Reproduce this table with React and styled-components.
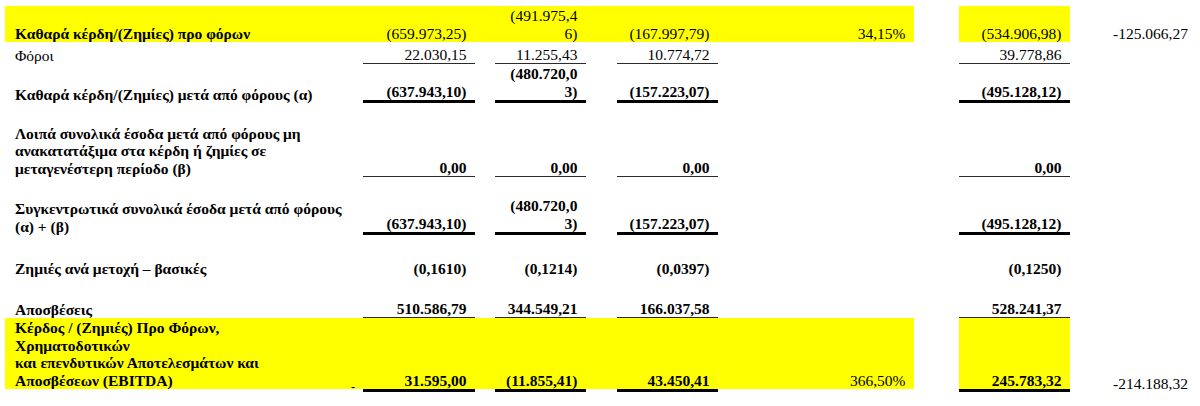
import React from 'react';
import styled, { createGlobalStyle } from 'styled-components';

const GlobalStyle = createGlobalStyle`
  html, body { margin: 0; padding: 0; background: #fff; }
`;

const YELLOW = '#ffff00';

const Sheet = styled.table`
  margin: 6px 0 0 5px;
  width: 1195px;
  table-layout: fixed;
  border-collapse: separate;
  border-spacing: 0;
  font-family: "Liberation Serif", "Times New Roman", serif;
  font-size: 15.5px;
  line-height: 17.5px;
  color: #000;
`;

const Col = styled.col`
  width: ${p => p.$w}px;
`;

const Row = styled.tr`
  height: ${p => p.$h}px;
`;

const lineStyle = (line) => {
  if (line === 'thick') return '3px solid #000';
  if (line === 'thin') return '1px solid #2b2b2b';
  if (line === 'clear') return '3px solid transparent';
  return 'none';
};

const BaseCell = styled.td`
  padding: 0;
  vertical-align: bottom;
  white-space: nowrap;
  background: ${p => (p.$hl ? YELLOW : 'transparent')};
  background-clip: padding-box;
  border-bottom: ${p => lineStyle(p.$line)};
  font-weight: ${p => (p.$bold ? 700 : 400)};
`;

const Label = styled(BaseCell)`
  padding-left: 10px;
  text-align: left;
`;

const LabelInner = styled.div`
  display: flex;
  justify-content: space-between;
  align-items: flex-end;
`;

const Dash = styled.span`
  font-size: 12px;
  line-height: 12px;
  font-weight: 700;
  margin: 0 8px -4px 0;
`;

const Amount = styled(BaseCell)`
  padding-right: 8.5px;
  text-align: right;
`;

const Gap = styled(BaseCell)``;

const Outside = styled(BaseCell)`
  padding-right: 12px;
  text-align: right;
`;

const widths = [358, 112, 20, 91, 31, 101, 196, 45, 111, 130];

const rows = [
  {
    h: 36, hl: true, boldLabel: true, boldNum: false, line: null,
    label: ['Καθαρά κέρδη/(Ζημίες) προ φόρων'],
    a: ['(659.973,25)'], b: ['(491.975,4', '6)'], c: ['(167.997,79)'],
    d: '34,15%', e: ['(534.906,98)'], f: '-125.066,27',
  },
  {
    h: 22, boldLabel: false, boldNum: false, line: 'thin',
    label: ['Φόροι'],
    a: ['22.030,15'], b: ['11.255,43'], c: ['10.774,72'], e: ['39.778,86'],
  },
  {
    h: 39, boldLabel: true, boldNum: true, line: 'thick',
    label: ['Καθαρά κέρδη/(Ζημίες) μετά από φόρους (α)'],
    a: ['(637.943,10)'], b: ['(480.720,0', '3)'], c: ['(157.223,07)'], e: ['(495.128,12)'],
  },
  {
    h: 74, boldLabel: true, boldNum: true, line: 'thin',
    label: [
      'Λοιπά συνολικά έσοδα μετά από φόρους μη',
      'ανακατατάξιμα στα κέρδη ή ζημίες σε',
      'μεταγενέστερη περίοδο (β)',
    ],
    a: ['0,00'], b: ['0,00'], c: ['0,00'], e: ['0,00'],
  },
  {
    h: 58, boldLabel: true, boldNum: true, line: 'thick',
    label: ['Συγκεντρωτικά συνολικά έσοδα μετά από φόρους', '(α) + (β)'],
    a: ['(637.943,10)'], b: ['(480.720,0', '3)'], c: ['(157.223,07)'], e: ['(495.128,12)'],
  },
  {
    h: 42, boldLabel: true, boldNum: true, line: null,
    label: ['Ζημιές ανά μετοχή – βασικές'],
    a: ['(0,1610)'], b: ['(0,1214)'], c: ['(0,0397)'], e: ['(0,1250)'],
  },
  {
    h: 41, boldLabel: true, boldNum: true, line: 'thin',
    label: ['Αποσβέσεις'],
    a: ['510.586,79'], b: ['344.549,21'], c: ['166.037,58'], e: ['528.241,37'],
  },
  {
    h: 74, hl: true, boldLabel: true, boldNum: true, line: 'thick', dash: true,
    label: [
      'Κέρδος / (Ζημιές) Προ Φόρων,',
      'Χρηματοδοτικών',
      'και επενδυτικών Αποτελεσμάτων και',
      'Αποσβέσεων (EBITDA)',
    ],
    a: ['31.595,00'], b: ['(11.855,41)'], c: ['43.450,41'],
    d: '366,50%', e: ['245.783,32'], f: '-214.188,32',
  },
];

const Lines = ({ items }) =>
  items.map((t, i) => (
    <React.Fragment key={i}>
      {i > 0 && <br />}
      {t}
    </React.Fragment>
  ));

const App = () => (
  <>
    <GlobalStyle />
    <Sheet>
      <colgroup>
        {widths.map((w, i) => <Col key={i} $w={w} />)}
      </colgroup>
      <tbody>
        {rows.map((r, i) => {
          // yellow rows that carry a thick rule keep the fill above the rule
          const rest = r.hl && r.line === 'thick' ? 'clear' : null;
          return (
            <Row key={i} $h={r.h}>
              <Label $hl={r.hl} $bold={r.boldLabel} $line={rest}>
                {r.dash ? (
                  <LabelInner>
                    <span><Lines items={r.label} /></span>
                    <Dash>-</Dash>
                  </LabelInner>
                ) : (
                  <Lines items={r.label} />
                )}
              </Label>
              <Amount $hl={r.hl} $bold={r.boldNum} $line={r.line}><Lines items={r.a} /></Amount>
              <Gap $hl={r.hl} $line={rest} />
              <Amount $hl={r.hl} $bold={r.boldNum} $line={r.line}><Lines items={r.b} /></Amount>
              <Gap $hl={r.hl} $line={rest} />
              <Amount $hl={r.hl} $bold={r.boldNum} $line={r.line}><Lines items={r.c} /></Amount>
              <Amount $hl={r.hl} $line={rest}>{r.d}</Amount>
              <Gap />
              <Amount $hl={r.hl} $bold={r.boldNum} $line={r.line}><Lines items={r.e} /></Amount>
              <Outside>{r.f}</Outside>
            </Row>
          );
        })}
      </tbody>
    </Sheet>
  </>
);

export default App;
